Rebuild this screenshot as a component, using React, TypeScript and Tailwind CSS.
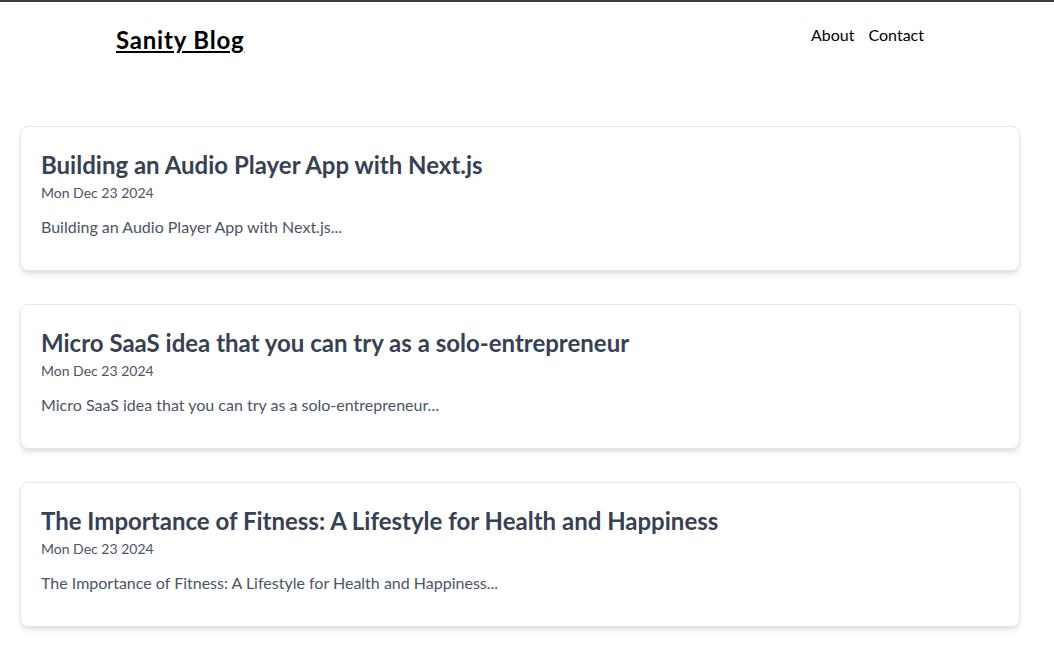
import React from "react";

const posts = [
  {
    title: "Building an Audio Player App with Next.js",
    date: "Mon Dec 23 2024",
    excerpt: "Building an Audio Player App with Next.js...",
  },
  {
    title: "Micro SaaS idea that you can try as a solo-entrepreneur",
    date: "Mon Dec 23 2024",
    excerpt: "Micro SaaS idea that you can try as a solo-entrepreneur...",
  },
  {
    title: "The Importance of Fitness: A Lifestyle for Health and Happiness",
    date: "Mon Dec 23 2024",
    excerpt: "The Importance of Fitness: A Lifestyle for Health and Happiness...",
  },
];

export default function App() {
  return (
    <div className="min-h-screen bg-white border-t-2 border-[#3c3c3c] font-['Segoe_UI','Lato','Noto_Sans',sans-serif]">
      {/* Header */}
      <header className="flex items-center justify-between pl-[116px] pr-[130px] pt-[22px] pb-[70px]">
        <a href="#" className="text-[24px] font-bold tracking-[0.8px] text-black underline leading-[32px]">
          Sanity Blog
        </a>
        <nav className="flex gap-[14px] text-[16px] text-black -mt-[11px]">
          <a href="#">About</a>
          <a href="#">Contact</a>
        </nav>
      </header>

      {/* Posts */}
      <main className="flex flex-col gap-[33px] px-[20px] pr-[34px]">
        {posts.map((p, i) => (
          <article
            key={i}
            className="h-[145px] rounded-lg border border-gray-200 bg-white px-[20px] pt-[22px] shadow-md"
          >
            <h2 className="text-[24px] font-bold leading-[32px] text-gray-700">{p.title}</h2>
            <p className="mt-[2px] text-[14px] leading-[20px] text-gray-600">{p.date}</p>
            <p className="mt-[12px] text-[16px] leading-[24px] text-gray-600">{p.excerpt}</p>
          </article>
        ))}
      </main>
    </div>
  );
}
